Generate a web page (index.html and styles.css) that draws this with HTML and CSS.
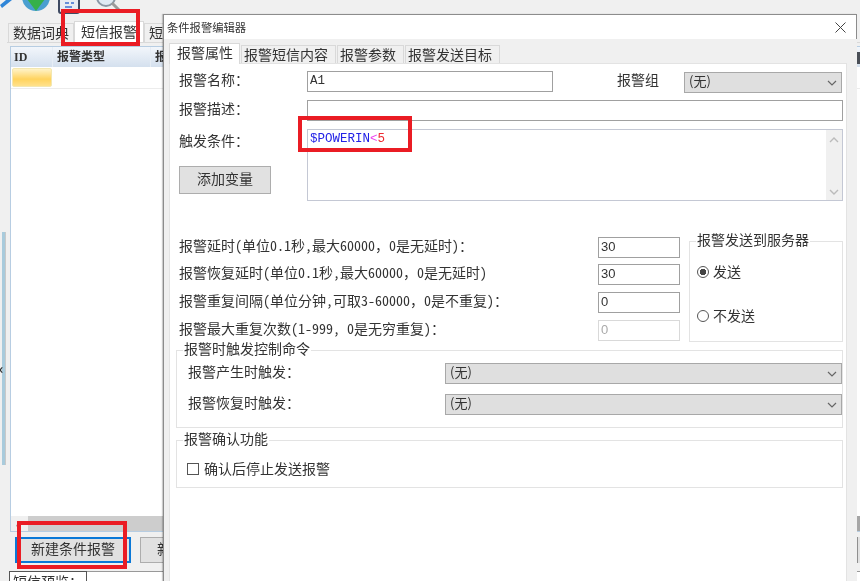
FILE: index.html
```html
<!DOCTYPE html>
<html lang="zh-CN">
<head>
<meta charset="utf-8">
<title>条件报警编辑器</title>
<link rel="stylesheet" href="styles.css">
</head>
<body>
<div class="app">
  <div class="toolbar">
    <svg class="tool-strip" width="130" height="20" viewBox="0 0 130 20" aria-hidden="true">
      <path d="M0 5 L6 0 H12 L2 8 Z" fill="#2f86d8"/>
      <circle cx="36" cy="-3" r="14" fill="#4a9fd0"/>
      <path d="M27 -1 H33 V-3 H40 V-1 H45 L36 11 Z" fill="#35b04a"/>
      <rect x="59" y="-3" width="20" height="16" rx="2" fill="#e8ecf2" stroke="#3e4a62" stroke-width="2"/>
      <path d="M65 3 H69 M71 3 H74 M65 7 H72" stroke="#3d6fd0" stroke-width="1.5"/>
      <circle cx="106" cy="-3" r="9" fill="#dfeaf4" stroke="#8a97a5" stroke-width="2"/>
      <path d="M112 3 L121 12" stroke="#9a9a9a" stroke-width="3"/>
      <path d="M94 12 H112" stroke="#d8d8d8" stroke-width="1.5"/>
    </svg>
  </div>

  <div class="main-tabs">
    <div class="main-tab">数据词典</div>
    <div class="main-tab main-tab-active">短信报警</div>
    <div class="main-tab">短</div>
  </div>

  <div class="main-panel">
    <div class="splitter"><span class="splitter-arrow">‹</span></div>
    <div class="main-content">
      <div class="grid-box">
        <div class="grid-head">
          <div class="col col-id">ID</div>
          <div class="col col-type">报警类型</div>
          <div class="col col-next">报</div>
          <div class="col-last"></div>
        </div>
        <div class="grid-row">
          <div class="cell-id"><div class="cell-sel"></div></div>
        </div>
        <div class="grid-space"></div>
        <div class="h-scroll"><span class="h-arrow">‹</span><div class="h-thumb"></div><div class="h-end"></div></div>
      </div>
      <div class="btn-row">
        <div class="btn btn-focus">新建条件报警</div>
        <div class="btn btn-plain">新</div>
        <div class="btn btn-far"></div>
      </div>
      <div class="preview-row">
        <div class="preview-label">短信预览：</div>
        <div class="preview-input"></div>
      </div>
    </div>
  </div>

  <div class="dialog">
    <div class="dlg-title">
      <span class="dlg-title-text">条件报警编辑器</span>
      <svg class="dlg-close" width="11" height="11" viewBox="0 0 11 11" aria-hidden="true"><path d="M0.5 0.5 L10.5 10.5 M10.5 0.5 L0.5 10.5" stroke="#444" stroke-width="1"/></svg>
    </div>
    <div class="dlg-body">
      <div class="dlg-tabs">
        <div class="dlg-tab dlg-tab-active">报警属性</div>
        <div class="dlg-tab">报警短信内容</div>
        <div class="dlg-tab">报警参数</div>
        <div class="dlg-tab">报警发送目标</div>
      </div>
      <div class="dlg-page">
        <div class="form-row row-name">
          <div class="label label-main">报警名称：</div>
          <div class="input input-name mono">A1</div>
          <div class="label label-group">报警组</div>
          <div class="select select-group"><span>(无)</span><svg class="chev" width="10" height="6" viewBox="0 0 10 6"><path d="M1 1 L5 5 L9 1" fill="none" stroke="#666" stroke-width="1.2"/></svg></div>
        </div>
        <div class="form-row row-desc">
          <div class="label label-main">报警描述：</div>
          <div class="input input-fill"></div>
        </div>
        <div class="form-row row-cond">
          <div class="cond-left">
            <div class="label label-cond">触发条件：</div>
            <div class="btn-add">添加变量</div>
          </div>
          <div class="cond-box">
            <div class="cond-text mono"><span class="tok-var">$POWERIN</span><span class="tok-op">&lt;</span><span class="tok-num">5</span></div>
            <div class="v-scroll">
              <svg width="10" height="6" viewBox="0 0 10 6"><path d="M1 5 L5 1 L9 5" fill="none" stroke="#bbb" stroke-width="1.4"/></svg>
              <svg width="10" height="6" viewBox="0 0 10 6"><path d="M1 1 L5 5 L9 1" fill="none" stroke="#bbb" stroke-width="1.4"/></svg>
            </div>
          </div>
        </div>

        <div class="delay-block">
          <div class="delay-list">
            <div class="delay-row"><div class="delay-label">报警延时(单位0.1秒,最大60000，0是无延时)：</div><div class="input input-num">30</div></div>
            <div class="delay-row delay-tight"><div class="delay-label">报警恢复延时(单位0.1秒,最大60000，0是无延时)</div><div class="input input-num">30</div></div>
            <div class="delay-row"><div class="delay-label">报警重复间隔(单位分钟,可取3-60000，0是不重复)：</div><div class="input input-num">0</div></div>
            <div class="delay-row"><div class="delay-label">报警最大重复次数(1-999, 0是无穷重复)：</div><div class="input input-num input-off">0</div></div>
          </div>
          <div class="group group-send">
            <div class="legend">报警发送到服务器</div>
            <div class="radio-line radio-first"><span class="radio radio-on"></span>发送</div>
            <div class="radio-line radio-second"><span class="radio"></span>不发送</div>
          </div>
        </div>

        <div class="group group-trigger">
          <div class="legend">报警时触发控制命令</div>
          <div class="trigger-row">
            <div class="trigger-label">报警产生时触发：</div>
            <div class="select select-wide"><span>(无)</span><svg class="chev" width="10" height="6" viewBox="0 0 10 6"><path d="M1 1 L5 5 L9 1" fill="none" stroke="#666" stroke-width="1.2"/></svg></div>
          </div>
          <div class="trigger-row trigger-second">
            <div class="trigger-label">报警恢复时触发：</div>
            <div class="select select-wide"><span>(无)</span><svg class="chev" width="10" height="6" viewBox="0 0 10 6"><path d="M1 1 L5 5 L9 1" fill="none" stroke="#666" stroke-width="1.2"/></svg></div>
          </div>
        </div>

        <div class="group group-confirm">
          <div class="legend">报警确认功能</div>
          <div class="check-line"><span class="checkbox"></span>确认后停止发送报警</div>
        </div>
      </div>
    </div>
  </div>

  <div class="mark mark-tab"></div>
  <div class="mark mark-cond"></div>
  <div class="mark mark-btn"></div>
</div>
</body>
</html>
```
FILE: styles.css
```css
* { box-sizing: border-box; }
html, body { margin: 0; padding: 0; }
body { background: #f0f0f0; }
.app {
  position: relative;
  width: 860px;
  height: 581px;
  overflow: hidden;
  background: #f0f0f0;
  color: #333;
  font-family: "Noto Sans CJK SC", "Liberation Sans", sans-serif;
  font-size: 14px;
  line-height: 17px;
  filter: blur(0.35px);
}
.mono { font-family: "Liberation Mono", "Noto Sans CJK SC", monospace; }

/* main window */
.toolbar { height: 21px; }
.tool-strip { display: block; }
.main-tabs { display: flex; height: 21px; padding-left: 8px; align-items: flex-end; }
.main-tab {
  height: 19px;
  padding: 0 4px;
  border: 1px solid #d9d9d9;
  border-bottom: 0;
  background: #f0f0f0;
  line-height: 17px;
  white-space: nowrap;
}
.main-tab-active {
  height: 21px;
  width: 70px;
  padding: 0 6px;
  background: #fff;
  line-height: 19px;
}
.main-panel { display: flex; height: 539px; }
.splitter {
  position: relative;
  flex: none;
  width: 7px;
  margin-top: 190px;
  height: 233px;
  background: linear-gradient(90deg, #f0f0f0 0 2px, #a9cbdc 2px 5px, #c9c9c9 5px 6px, #f0f0f0 6px);
}
.splitter-arrow {
  position: absolute;
  left: -1px;
  top: 129px;
  font-size: 14px;
  line-height: 14px;
  font-weight: 700;
  color: #333;
}
.main-content { flex: 1; padding-left: 3px; border-top: 1px solid #d9d9d9; padding-top: 3px; }
.grid-box {
  display: flex;
  flex-direction: column;
  height: 486px;
  border: 1px solid #b7cde2;
  border-right: 0;
  background: #fff;
}
.grid-head {
  display: flex;
  flex: none;
  height: 20px;
  background: linear-gradient(#f2f6fb, #d4e0ee);
  font-size: 12px;
  font-weight: 700;
  line-height: 18px;
}
.col { padding-left: 3px; border-right: 1px solid #e6edf5; }
.col-id { width: 42px; font-family: "Liberation Serif", serif; line-height: 20px; }
.col-type { width: 98px; padding-left: 4px; }
.col-next { flex: 1; padding-left: 4px; }
.col-last { flex: none; width: 3px; margin: 5px 0 3px; background: #4a4f57; }
.grid-row { display: flex; flex: none; height: 22px; border-bottom: 1px solid #ececec; }
.cell-id { width: 42px; padding: 1px; }
.cell-sel {
  height: 19px;
  border: 1px solid #f3e7b0;
  border-radius: 2px;
  background: linear-gradient(#fff3c8, #ffd35e 60%, #ffe18c);
}
.grid-space { flex: 1; }
.h-scroll { display: flex; flex: none; align-items: center; height: 15px; background: #f0f0f0; }
.h-arrow { width: 17px; padding-left: 5px; font-size: 12px; line-height: 12px; font-weight: 700; }
.h-thumb { flex: 1; height: 15px; background: #cdcdcd; }
.h-end { flex: none; width: 4px; height: 15px; background: #a6a6a6; }
.btn-row { display: flex; gap: 9px; margin-top: 5px; padding-left: 5px; }
.btn {
  flex: none;
  height: 26px;
  background: #e1e1e1;
  line-height: 18px;
  white-space: nowrap;
}
.btn-focus { width: 116px; border: 2px solid #0a78d7; text-align: center; }
.btn-plain { width: 116px; border: 1px solid #adadad; padding-left: 16px; line-height: 20px; }
.btn-far { width: 3px; margin-left: auto; border-left: 1px solid #8f8f8f; }
.preview-row { display: flex; margin-top: 8px; margin-left: -1px; }
.preview-label {
  flex: none;
  width: 78px;
  height: 20px;
  padding-left: 3px;
  background: #fff;
  border: 1px solid #555;
  border-bottom: 0;
  line-height: 18px;
  white-space: nowrap;
}
.preview-input { flex: 1; height: 20px; background: #fff; border-top: 1px solid #999; }

/* dialog window */
.dialog {
  position: absolute;
  left: 163px;
  top: 14px;
  width: 694px;
  height: 580px;
  display: flex;
  flex-direction: column;
  background: #f0f0f0;
  border-top: 1px solid #8c8c8c;
  border-left: 1px solid #8c8c8c;
  box-shadow: -1px 0 1px rgba(0,0,0,.2);
}
.dlg-title {
  display: flex;
  flex: none;
  align-items: center;
  justify-content: space-between;
  height: 24px;
  padding: 0 10px 0 3px;
  background: #fff;
  border-right: 1px solid #8c8c8c;
}
.dlg-title-text { font-size: 11.3px; line-height: 20px; padding-bottom: 1px; }
.dlg-body { flex: 1; display: flex; flex-direction: column; padding: 4px 10px 0 5px; }
.dlg-tabs { display: flex; flex: none; height: 20px; align-items: flex-end; }
.dlg-tab {
  height: 18px;
  padding: 0 7px 0 2px;
  margin-left: 1px;
  border: 1px solid #d9d9d9;
  border-bottom: 0;
  line-height: 16px;
  white-space: nowrap;
}
.dlg-tab-active { height: 21px; width: 71px; padding: 0 7px; margin-left: 0; margin-bottom: -1px; background: #fff; line-height: 17px; position: relative; }
.dlg-page { flex: 1; padding: 7px 3px 0 6px; background: #fff; border: 1px solid #e3e3e3; border-bottom: 0; }

.form-row { display: flex; }
.label { flex: none; white-space: nowrap; }
.row-name { height: 21px; margin-left: 3px; }
.row-desc { height: 21px; margin: 8px 0 0 3px; }
.row-cond { height: 72px; margin: 8px 0 0 3px; }
.label-main { width: 128px; }
.label-group { width: 67px; margin-left: 64px; }
.input {
  height: 21px;
  padding-left: 2px;
  background: #fff;
  border: 1px solid #a0a0a0;
  font-size: 12.5px;
  line-height: 18px;
}
.input-name { width: 246px; }
.input-fill { flex: 1; }
.select {
  display: flex;
  align-items: center;
  justify-content: space-between;
  height: 21px;
  padding: 0 4px;
  background: #dfdfdf;
  border: 1px solid #a8a8a8;
  font-size: 13px;
}
.select span { padding-bottom: 3px; line-height: 16px; }
.select-group { width: 158px; margin-top: 1px; }
.select-wide { width: 397px; margin-left: auto; }
.cond-left { width: 128px; display: flex; flex-direction: column; }
.label-cond { margin-top: 3px; }
.btn-add {
  width: 92px;
  height: 28px;
  margin-top: 17px;
  background: #e1e1e1;
  border: 1px solid #adadad;
  line-height: 22px;
  text-align: center;
}
.cond-box { flex: 1; display: flex; border: 1px solid #c4c8d4; background: #fff; }
.cond-text { flex: 1; padding: 1px 2px; font-size: 12.5px; line-height: 16px; }
.tok-var { color: #2222e6; }
.tok-op { color: #ee44ee; }
.tok-num { color: #ee2a30; }
.v-scroll {
  flex: none;
  display: flex;
  flex-direction: column;
  align-items: center;
  justify-content: space-between;
  width: 16px;
  padding: 7px 0 5px;
  background: #f0f0f0;
}
.delay-block { display: flex; margin: 36px 0 0 3px; }
.delay-list { width: 501px; margin-right: 9px; flex: none; }
.delay-row { display: flex; justify-content: space-between; height: 21px; margin-top: 7px; }
.delay-row:first-child { margin-top: 0; }
.delay-tight { margin-top: 6px; }
.delay-label { white-space: nowrap; font-family: "Noto Sans Mono CJK SC", "Noto Sans CJK SC", monospace; }
.input-num { flex: none; width: 82px; font-family: "Liberation Sans", sans-serif; font-size: 13px; line-height: 17px; }
.input-off { border-color: #d9d9d9; color: #aaa; background: #fff; }
.group { position: relative; border: 1px solid #e3e3e3; }
.legend { position: absolute; left: 6px; top: -12px; padding: 0 1px; background: #fff; line-height: 18px; white-space: nowrap; }
.group-send { flex: 1; height: 101px; margin-top: 4px; }
.radio-line { display: flex; align-items: center; gap: 4px; padding-left: 7px; line-height: 20px; }
.radio-first { margin-top: 19px; }
.radio-second { margin-top: 24px; }
.radio {
  flex: none;
  width: 12px;
  height: 12px;
  margin-top: 2px;
  border: 1px solid #555;
  border-radius: 50%;
  background: #fff;
}
.radio-on { background: radial-gradient(circle, #444 0 3px, #fff 3.5px); }
.group-trigger { height: 78px; margin-top: 8px; padding: 12px 0 0 11px; }
.trigger-row { display: flex; height: 21px; }
.trigger-second { margin-top: 10px; }
.trigger-label { white-space: nowrap; }
.group-confirm { height: 48px; margin-top: 12px; padding: 17px 0 0 10px; }
.check-line { display: flex; align-items: center; gap: 5px; line-height: 20px; }
.checkbox { flex: none; width: 12px; height: 12px; margin-top: 2px; border: 1px solid #555; background: #fff; }

/* red annotations */
.mark { position: absolute; border: 4px solid #ea1c24; }
.mark-tab { left: 61px; top: 9px; width: 79px; height: 37px; }
.mark-cond { left: 298px; top: 116px; width: 114px; height: 36px; }
.mark-btn { left: 17px; top: 521px; width: 110px; height: 48px; }
```
